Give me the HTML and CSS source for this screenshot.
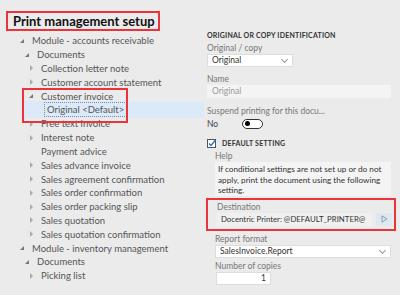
FILE: index.html
```html
<!DOCTYPE html>
<html lang="en">
<head>
    <meta charset="UTF-8">
    <title>Print management setup</title>
    <link rel="stylesheet" href="styles.css">
</head>
<body>
    <div class="page">
        <div class="left">
            <h1 class="title">Print management setup</h1>
            <ul class="tree">
                <li class="row l0"><span class="arrow open"></span>Module - accounts receivable</li>
                <li class="row l1"><span class="arrow open"></span>Documents</li>
                <li class="row l2"><span class="arrow closed"></span>Collection letter note</li>
                <li class="row l2"><span class="arrow closed"></span>Customer account statement</li>
                <li class="row l2"><span class="arrow open"></span>Customer invoice</li>
                <li class="row l3 selected"><span class="focus">Original &lt;Default&gt;</span></li>
                <li class="row l2"><span class="arrow closed"></span>Free text invoice</li>
                <li class="row l2"><span class="arrow closed"></span>Interest note</li>
                <li class="row l2"><span class="arrow"></span>Payment advice</li>
                <li class="row l2"><span class="arrow closed"></span>Sales advance invoice</li>
                <li class="row l2"><span class="arrow closed"></span>Sales agreement confirmation</li>
                <li class="row l2"><span class="arrow closed"></span>Sales order confirmation</li>
                <li class="row l2"><span class="arrow closed"></span>Sales order packing slip</li>
                <li class="row l2"><span class="arrow closed"></span>Sales quotation</li>
                <li class="row l2"><span class="arrow closed"></span>Sales quotation confirmation</li>
                <li class="row l0"><span class="arrow open"></span>Module - inventory management</li>
                <li class="row l1"><span class="arrow open"></span>Documents</li>
                <li class="row l2"><span class="arrow closed"></span>Picking list</li>
            </ul>
            <div class="invoice-box"></div>
        </div>
        <div class="right">
            <div class="section-head">ORIGINAL OR COPY IDENTIFICATION</div>
            <div class="label">Original / copy</div>
            <div class="select small">Original<span class="chev"></span></div>
            <div class="label">Name</div>
            <div class="input readonly">Original</div>
            <div class="label">Suspend printing for this docu...</div>
            <div class="toggle-row">No<span class="toggle"><span class="knob"></span></span></div>
            <div class="check-row">
                <span class="checkbox">
                    <svg width="9" height="9" viewBox="0 0 9 9"><rect x="0.5" y="0.5" width="8" height="8" fill="#fff" stroke="#555"/><path d="M2 4.5 L4 6.5 L8 1.5" fill="none" stroke="#1f6fc5" stroke-width="1.3"/></svg>
                </span>
                <span class="section-head inline">DEFAULT SETTING</span>
            </div>
            <div class="group">
                <div class="label">Help</div>
                <div class="help">If conditional settings are not set up or do not apply, print the document using the following setting.</div>
                <div class="dest-box">
                    <div class="label">Destination</div>
                    <div class="dest-row">
                        <div class="input dest">Docentric Printer: @DEFAULT_PRINTER@</div>
                        <div class="go">
                            <svg width="7" height="8" viewBox="0 0 7 8"><path d="M1 0.8 L6 4 L1 7.2 Z" fill="none" stroke="#8a9bb0" stroke-width="1"/></svg>
                        </div>
                    </div>
                </div>
                <div class="label gap">Report format</div>
                <div class="select wide">SalesInvoice.Report<span class="chev"></span></div>
                <div class="label gap">Number of copies</div>
                <div class="input copies">1</div>
            </div>
        </div>
    </div>
</body>
</html>
```

FILE: styles.css
```css
body {
    margin: 0;
    background: #ebebeb;
    font-family: Lato, sans-serif;
    color: #444;
}
.page {
    display: flex;
    width: 400px;
    height: 295px;
    overflow: hidden;
}
.left {
    position: relative;
    width: 204px;
    flex-shrink: 0;
}
.title {
    margin: 11px 0 0 6px;
    display: inline-block;
    border: 2px solid #e8343a;
    padding: 0 3px 0 5px;
    font-size: 13px;
    line-height: 16px;
    font-weight: 700;
    color: #111;
}
.tree {
    list-style: none;
    margin: 3px 0 0;
    padding: 0;
}
.row {
    display: flex;
    align-items: center;
    height: 13.8px;
    font-size: 9.5px;
    white-space: nowrap;
    color: #555;
}
.arrow {
    width: 12px;
    height: 8px;
    flex-shrink: 0;
    position: relative;
}
.arrow.open::before {
    content: "";
    position: absolute;
    left: 0;
    top: 2px;
    border-style: solid;
    border-width: 0 0 4px 4px;
    border-color: transparent transparent #777 transparent;
}
.arrow.closed::before {
    content: "";
    position: absolute;
    left: 1px;
    top: 1px;
    border-style: solid;
    border-width: 3px 0 3px 3px;
    border-color: transparent transparent transparent #aaa;
}
.l0 { padding-left: 20px; }
.l1 { padding-left: 25px; }
.l2 { padding-left: 29px; }
.l3 { padding-left: 44px; }
.selected {
    margin: -1.5px 0 -1.5px 24px;
    padding-left: 20px;
    height: 17px;
    background: #dce9f8;
}
.focus {
    border: 1px dotted #7a8ea6;
    padding: 0 2px;
    line-height: 13px;
}
.invoice-box {
    position: absolute;
    left: 22px;
    top: 88px;
    width: 102px;
    height: 31px;
    border: 2px solid #e8343a;
}
.right {
    flex: 1;
    padding: 29px 0 0 3px;
    font-size: 8.5px;
}
.section-head {
    font-size: 7px;
    font-weight: 700;
    color: #333;
    letter-spacing: 0.2px;
    line-height: 12px;
}
.section-head.inline {
    margin-left: 6px;
}
.label {
    color: #777;
    line-height: 12px;
    margin-top: 1px;
}
.label.gap {
    margin-top: 2px;
}
.select, .input {
    box-sizing: border-box;
    height: 13px;
    line-height: 11px;
    border: 1px solid #ddd;
    background: #fff;
    padding: 0 4px;
    color: #333;
    position: relative;
    white-space: nowrap;
    overflow: hidden;
}
.select.small {
    width: 86px;
    margin-bottom: 6px;
}
.chev {
    position: absolute;
    right: 5px;
    top: 2px;
    width: 4px;
    height: 4px;
    border-right: 1px solid #999;
    border-bottom: 1px solid #999;
    transform: rotate(45deg);
}
.input.readonly {
    width: 184px;
    background: #f4f4f4;
    border-color: #f4f4f4;
    color: #999;
    margin-bottom: 7px;
}
.toggle-row {
    display: flex;
    align-items: center;
    height: 13px;
    color: #444;
}
.toggle {
    margin-left: 24px;
    width: 17px;
    height: 8px;
    border: 1px solid #333;
    border-radius: 5px;
    background: #fff;
    display: flex;
    align-items: center;
    padding-left: 2px;
}
.knob {
    width: 5px;
    height: 5px;
    border-radius: 50%;
    background: #000;
}
.check-row {
    display: flex;
    align-items: center;
    margin-top: 7px;
    height: 12px;
}
.checkbox {
    display: flex;
}
.group {
    padding-left: 8px;
}
.help {
    width: 170px;
    background: #f4f4f4;
    padding: 2px 3px 0;
    font-size: 8.2px;
    line-height: 10.5px;
    color: #333;
}
.dest-box {
    margin: 2px 0 0 -9px;
    width: 175px;
    border: 2px solid #e8343a;
    padding: 0 2px 3px 9px;
}
.dest-row {
    display: flex;
    gap: 4px;
}
.input.dest {
    width: 155px;
    padding: 0 3px;
    font-size: 7.8px;
    background: #f0f0f0;
    border-color: #f0f0f0;
    color: #333;
}
.go {
    width: 16px;
    height: 13px;
    background: #dde8f3;
    display: flex;
    align-items: center;
    justify-content: center;
}
.select.wide {
    width: 176px;
}
.input.copies {
    width: 55px;
    margin-left: 1px;
    text-align: right;
}
```
